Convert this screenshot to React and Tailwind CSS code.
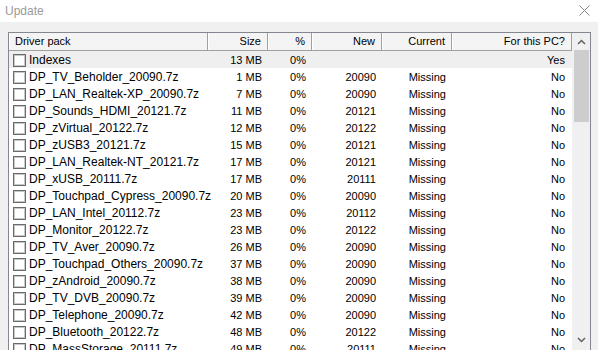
const rows = [
  ['Indexes', '13 MB', '0%', '', '', 'Yes'],
  ['DP_TV_Beholder_20090.7z', '1 MB', '0%', '20090', 'Missing', 'No'],
  ['DP_LAN_Realtek-XP_20090.7z', '7 MB', '0%', '20090', 'Missing', 'No'],
  ['DP_Sounds_HDMI_20121.7z', '11 MB', '0%', '20121', 'Missing', 'No'],
  ['DP_zVirtual_20122.7z', '12 MB', '0%', '20122', 'Missing', 'No'],
  ['DP_zUSB3_20121.7z', '15 MB', '0%', '20121', 'Missing', 'No'],
  ['DP_LAN_Realtek-NT_20121.7z', '17 MB', '0%', '20121', 'Missing', 'No'],
  ['DP_xUSB_20111.7z', '17 MB', '0%', '20111', 'Missing', 'No'],
  ['DP_Touchpad_Cypress_20090.7z', '20 MB', '0%', '20090', 'Missing', 'No'],
  ['DP_LAN_Intel_20112.7z', '23 MB', '0%', '20112', 'Missing', 'No'],
  ['DP_Monitor_20122.7z', '23 MB', '0%', '20122', 'Missing', 'No'],
  ['DP_TV_Aver_20090.7z', '26 MB', '0%', '20090', 'Missing', 'No'],
  ['DP_Touchpad_Others_20090.7z', '37 MB', '0%', '20090', 'Missing', 'No'],
  ['DP_zAndroid_20090.7z', '38 MB', '0%', '20090', 'Missing', 'No'],
  ['DP_TV_DVB_20090.7z', '39 MB', '0%', '20090', 'Missing', 'No'],
  ['DP_Telephone_20090.7z', '42 MB', '0%', '20090', 'Missing', 'No'],
  ['DP_Bluetooth_20122.7z', '48 MB', '0%', '20122', 'Missing', 'No'],
  ['DP_MassStorage_20111.7z', '49 MB', '0%', '20111', 'Missing', 'No'],
]

const cols = 'grid grid-cols-[199px_60px_44px_70px_70px_120px]'

function HeaderCell({ children, left }) {
  return (
    <div
      className={`h-[17px] flex items-center bg-[#f4f4f4] border-r border-[#a0a0a0] border-l border-l-white ${
        left ? 'pl-[5px]' : 'justify-end pr-[6px]'
      }`}
    >
      {children}
    </div>
  )
}

export default function App() {
  return (
    <div
      className="w-[598px] h-[350px] overflow-hidden bg-[#f0f0f0] text-black"
      style={{ fontFamily: '"Liberation Sans", Arial, sans-serif' }}
    >
      {/* Title bar */}
      <div className="h-[22px] bg-white flex items-center justify-between pl-[5px] pr-[8px]">
        <span className="text-[12px] text-[#9a9a9a]">Update</span>
        <svg width="11" height="11" viewBox="0 0 11 11" className="mt-[-2px]">
          <path d="M0.5 0.5 L10.5 10.5 M10.5 0.5 L0.5 10.5" stroke="#8a8a8a" strokeWidth="1" />
        </svg>
      </div>

      {/* List */}
      <div className="mt-[10px] ml-[8px] w-[583px] h-[330px] border border-[#828790] bg-white flex overflow-hidden">
        <div className="w-[563px] text-[11px]">
          <div className={`${cols} border-b border-[#a0a0a0]`}>
            <HeaderCell left>Driver pack</HeaderCell>
            <HeaderCell>Size</HeaderCell>
            <HeaderCell>%</HeaderCell>
            <HeaderCell>New</HeaderCell>
            <HeaderCell>Current</HeaderCell>
            <HeaderCell>For this PC?</HeaderCell>
          </div>
          {rows.map((r, i) => (
            <div key={i} className={`${cols} h-[17px] items-center ${i === 0 ? 'bg-[#efefef]' : ''}`}>
              <div className="flex items-center pl-[4px] gap-[3px]">
                <span className="w-[13px] h-[13px] border border-[#6a6a6a] shadow-[inset_0_0_0_1px_#c8c8c8] bg-white shrink-0" />
                <span className="text-[12px] whitespace-nowrap">{r[0]}</span>
              </div>
              <div className="text-right pr-[6px]">{r[1]}</div>
              <div className="text-right pr-[6px]">{r[2]}</div>
              <div className="text-right pr-[6px]">{r[3]}</div>
              <div className="text-right pr-[6px]">{r[4]}</div>
              <div className="text-right pr-[7px]">{r[5]}</div>
            </div>
          ))}
        </div>

        {/* Scrollbar */}
        <div className="w-[18px] bg-[#f0f0f0] flex flex-col items-center">
          <div className="h-[17px] flex items-center justify-center">
            <svg width="9" height="6" viewBox="0 0 9 6">
              <path d="M1 5 L4.5 1.5 L8 5" stroke="#606060" strokeWidth="1.5" fill="none" />
            </svg>
          </div>
          <div className="w-[15px] h-[72px] bg-[#cdcdcd]" />
          <div className="flex-1" />
          <div className="h-[17px] flex items-center justify-center mb-[13px]">
            <svg width="9" height="6" viewBox="0 0 9 6">
              <path d="M1 1 L4.5 4.5 L8 1" stroke="#606060" strokeWidth="1.5" fill="none" />
            </svg>
          </div>
        </div>
      </div>
    </div>
  )
}
